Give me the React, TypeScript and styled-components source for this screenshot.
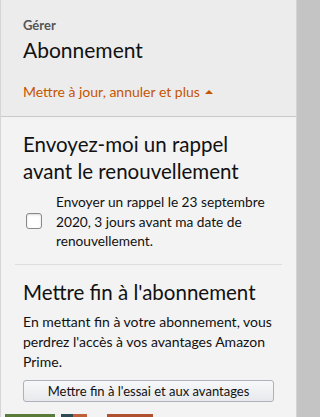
import React from "react";
import styled, { createGlobalStyle } from "styled-components";

const Global = createGlobalStyle`
  html, body { margin: 0; padding: 0; background: #c4c4c4; }
  body { font-family: Lato, "Noto Sans", sans-serif; color: #111; }
  * { box-sizing: border-box; }
`;

const Card = styled.div`
  width: 297px;
  border-left: 1px solid #d5d5d5;
  border-right: 1px solid #d5d5d5;
  background: #f3f3f3;
`;

const Header = styled.div`
  background: #ececec;
  border-bottom: 1px solid #c9c9c9;
  padding: 17px 22px 15px 22px;
`;

const Overline = styled.div`
  font-size: 13px;
  font-weight: 700;
  color: #555;
  line-height: 16px;
`;

const Title = styled.div`
  font-size: 21px;
  line-height: 28px;
  color: #111;
  margin-top: 3px;
`;

const Toggle = styled.div`
  margin-top: 19px;
  font-size: 14px;
  line-height: 18px;
  color: #c45500;
  display: flex;
  align-items: center;
  gap: 4px;
`;

const Caret = styled.span`
  width: 0;
  height: 0;
  border-left: 4px solid transparent;
  border-right: 4px solid transparent;
  border-bottom: 4px solid #c45500;
  margin-left: 1px;
`;

const Section = styled.div<{ $divider?: boolean }>`
  padding: ${(p) => (p.$divider ? "14px 8px 13px" : "14px 22px 12px")};
  margin: 0 ${(p) => (p.$divider ? "14px" : "0")};
  border-bottom: ${(p) => (p.$divider ? "1px solid #dddddd" : "none")};
`;

const SectionTitle = styled.div`
  font-size: 20.5px;
  line-height: 27px;
  color: #111;
`;

const CheckRow = styled.label`
  display: flex;
  align-items: center;
  gap: 14px;
  margin-top: 7px;
  padding-left: 3px;
`;

const Box = styled.span`
  flex: none;
  width: 16px;
  height: 16px;
  border: 1px solid #888;
  border-radius: 3px;
  background: #fff;
  box-shadow: inset 0 1px 2px rgba(0, 0, 0, 0.15);
`;

const CheckText = styled.span`
  font-size: 13.7px;
  line-height: 19.5px;
  color: #111;
`;

const Para = styled.p`
  margin: 6px 0 0;
  font-size: 14px;
  line-height: 20px;
  color: #111;
`;

const Button = styled.button`
  display: block;
  width: 100%;
  margin-top: 8px;
  height: 22px;
  border: 1px solid #adb1b8;
  border-radius: 3px;
  background: linear-gradient(to bottom, #f7f8fa, #e7e9ec);
  font-family: inherit;
  font-size: 13px;
  color: #111;
  padding: 0;
`;

const Peek = styled.div`
  display: flex;
  height: 4px;
  width: 100%;
`;

const PeekBlock = styled.div<{ $w: number; $c: string }>`
  width: ${(p) => p.$w}px;
  background: ${(p) => p.$c};
`;

export default function App() {
  return (
    <>
      <Global />
      <Card>
        <Header>
          <Overline>Gérer</Overline>
          <Title>Abonnement</Title>
          <Toggle>
            Mettre à jour, annuler et plus <Caret />
          </Toggle>
        </Header>
        <Section $divider>
          <SectionTitle>
            Envoyez-moi un rappel
            <br />
            avant le renouvellement
          </SectionTitle>
          <CheckRow>
            <Box />
            <CheckText>
              Envoyer un rappel le 23 septembre 2020, 3 jours avant ma date de
              renouvellement.
            </CheckText>
          </CheckRow>
        </Section>
        <Section>
          <SectionTitle>Mettre fin à l'abonnement</SectionTitle>
          <Para>
            En mettant fin à votre abonnement, vous perdrez l'accès à vos
            avantages Amazon Prime.
          </Para>
          <Button>Mettre fin à l'essai et aux avantages</Button>
        </Section>
        <Peek>
          <PeekBlock $w={4} $c="#f3f3f3" />
          <PeekBlock $w={50} $c="#5a7a3a" />
          <PeekBlock $w={6} $c="#f3f3f3" />
          <PeekBlock $w={12} $c="#2d4a50" />
          <PeekBlock $w={14} $c="#c0603a" />
          <PeekBlock $w={20} $c="#f3f3f3" />
          <PeekBlock $w={46} $c="#b0502e" />
          <PeekBlock $w={143} $c="#f3f3f3" />
        </Peek>
      </Card>
    </>
  );
}
